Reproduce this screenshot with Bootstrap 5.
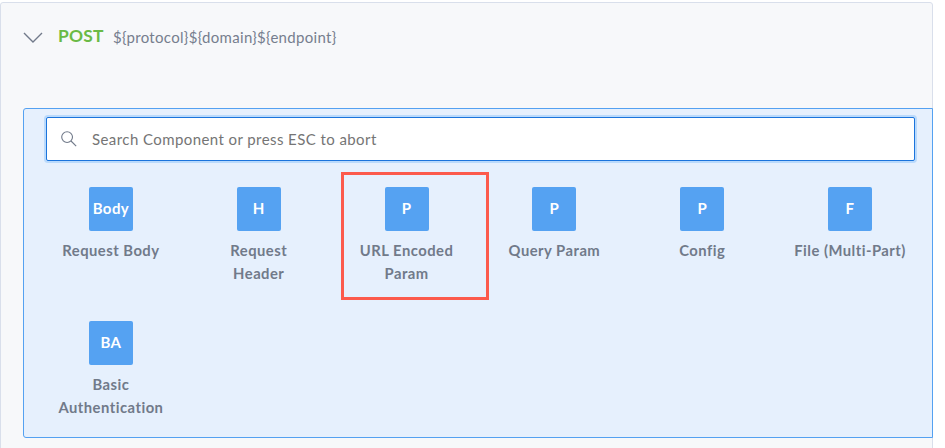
<!DOCTYPE html>
<html lang="en">
<head>
<meta charset="utf-8">
<meta name="viewport" content="width=device-width, initial-scale=1">
<title>Request components</title>
<link href="https://cdn.jsdelivr.net/npm/bootstrap@5.3.0/dist/css/bootstrap.min.css" rel="stylesheet">
<style>
body { font-family: Lato, "Open Sans", sans-serif; background: #fff; height: 448px; padding-top: 2px; }
.request-panel { width: 933px; height: 460px; background: #f7f8fa; border: 1px solid #d9dfeb; border-radius: 3px; }
.request-head { height: 105px; padding: 22px 0 0 22px; }
.chevron { margin: 6px 9px 0 0; }
.method { color: #6aba45; font-size: 17.4px; line-height: 24px; font-weight: 700; letter-spacing: .25px; width: 60px; padding-left: 5px; margin-top: -1px; margin-left: -1px; }
.endpoint { color: #767e8e; font-size: 15px; line-height: 24px; letter-spacing: .31px; }
.picker { margin-left: 22px; margin-right: -1px; height: 330px; background: #e6f0fd; border: 1px solid #54a1f1; border-radius: 3px 0 0 3px; }
.search-box { margin: 8px 17px 0 22px; height: 44px; background: #fff; border: 1px solid #1b74dc; border-radius: 2px; box-shadow: 0 0 0 2px #badafc; padding-left: 14px; }
.search-box .form-control { font-size: 15px; letter-spacing: .42px; color: #666; padding: 0 0 0 15px; line-height: 24px; }
.search-box .form-control::placeholder { color: #757575; opacity: 1; }
.components { margin: 11px 8px 0 13px; }
.component { height: 134px; padding-top: 15px; }
.tile { width: 44px; height: 44px; background: #55a2f2; border-radius: 2px; font-size: 15px; letter-spacing: .4px; padding-bottom: 1px; }
.component-label { color: #717a8a; font-size: 14.8px; line-height: 23px; letter-spacing: .48px; margin-top: 8px; }
.highlighted { position: relative; }
.highlighted::after { content: ""; position: absolute; left: 8px; top: 0; width: 148px; height: 128px; border: 3px solid #fc5a4c; }
</style>
<script src="https://cdn.jsdelivr.net/npm/bootstrap@5.3.0/dist/js/bootstrap.bundle.min.js"></script>
</head>
<body class="overflow-hidden">
<main class="request-panel">
  <header class="request-head d-flex align-items-start">
    <svg class="chevron flex-shrink-0" width="22" height="14" viewBox="0 0 22 14" fill="none" stroke="#717a8a" stroke-width="1.4"><path d="M1 2 10 11 19 2"/></svg>
    <span class="method">POST</span>
    <span class="endpoint">${protocol}${domain}${endpoint}</span>
  </header>
  <section class="picker">
    <div class="search-box d-flex align-items-center">
      <svg class="flex-shrink-0" width="16" height="16" viewBox="0 0 16 16" fill="none" stroke="#717a8a" stroke-width="1.1"><circle cx="6.1" cy="6.1" r="5.4"/><path d="M10 10 15.2 15.2"/></svg>
      <input class="form-control border-0 bg-transparent shadow-none" type="text" placeholder="Search Component or press ESC to abort" aria-label="Search Component">
    </div>
    <div class="components row row-cols-6 g-0 text-center fw-bold">
      <div class="component col"><div class="tile d-flex align-items-center justify-content-center mx-auto text-white">Body</div><div class="component-label">Request Body</div></div>
      <div class="component col"><div class="tile d-flex align-items-center justify-content-center mx-auto text-white">H</div><div class="component-label">Request<br>Header</div></div>
      <div class="component col highlighted"><div class="tile d-flex align-items-center justify-content-center mx-auto text-white">P</div><div class="component-label">URL Encoded<br>Param</div></div>
      <div class="component col"><div class="tile d-flex align-items-center justify-content-center mx-auto text-white">P</div><div class="component-label">Query Param</div></div>
      <div class="component col"><div class="tile d-flex align-items-center justify-content-center mx-auto text-white">P</div><div class="component-label">Config</div></div>
      <div class="component col"><div class="tile d-flex align-items-center justify-content-center mx-auto text-white">F</div><div class="component-label">File (Multi-Part)</div></div>
      <div class="component col"><div class="tile d-flex align-items-center justify-content-center mx-auto text-white">BA</div><div class="component-label">Basic<br>Authentication</div></div>
    </div>
  </section>
</main>
</body>
</html>
